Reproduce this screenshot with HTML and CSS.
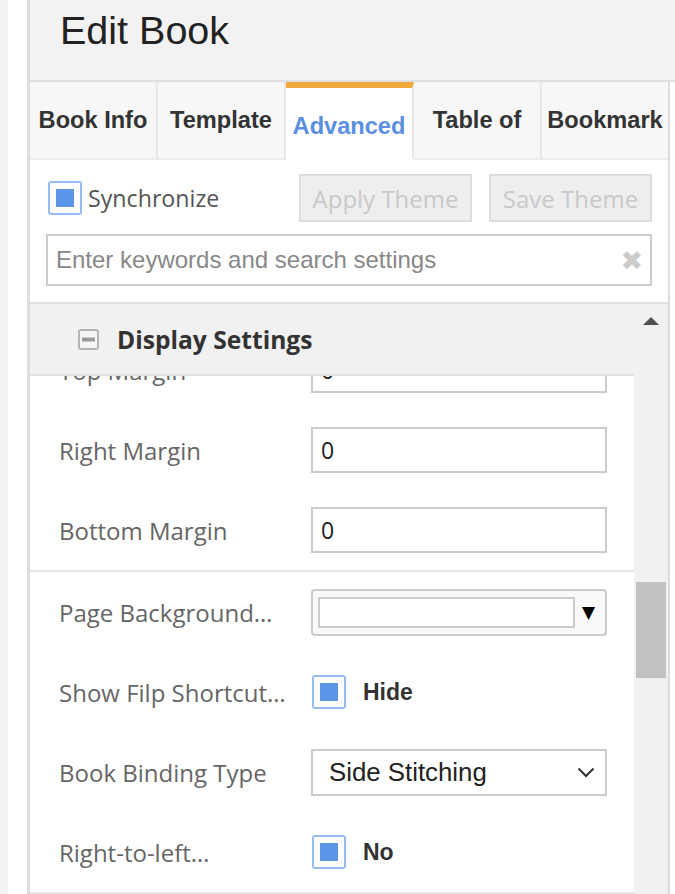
FILE: index.html
```html
<!DOCTYPE html>
<html lang="en">

<head>
    <meta charset="UTF-8">
    <meta name="viewport" content="width=device-width, initial-scale=1.0">
    <title>Edit Book</title>
    <link rel="stylesheet" href="styles.css">
</head>

<body>
    <div class="gutter"></div>

    <div class="panel">
        <div class="panel-head">
            <h1>Edit Book</h1>
        </div>

        <div class="panel-body">
            <div class="main">
                <div class="tabs">
                    <div class="tab">Book Info</div>
                    <div class="tab">Template</div>
                    <div class="tab active">Advanced</div>
                    <div class="tab">Table of</div>
                    <div class="tab last">Bookmark</div>
                </div>

                <div class="toolbar">
                    <div class="sync-row">
                        <span class="check"><span class="check-mark"></span></span>
                        <span class="sync-label">Synchronize</span>
                        <button class="btn first">Apply Theme</button>
                        <button class="btn">Save Theme</button>
                    </div>
                    <div class="search">
                        <input type="text" placeholder="Enter keywords and search settings">
                        <span class="search-clear">&#10006;</span>
                    </div>
                </div>

                <div class="settings-area">
                    <div class="settings">
                        <div class="section-head">
                            <svg class="collapse-icon" width="21" height="21" viewBox="0 0 21 21">
                                <rect x="1" y="1" width="19" height="19" rx="2" fill="#f6f6f6" stroke="#b4b4b4" stroke-width="2" />
                                <rect x="4" y="8.5" width="13" height="4" fill="#9a9a9a" />
                            </svg>
                            <span>Display Settings</span>
                        </div>

                        <div class="rows-view">
                            <div class="rows">
                                <div class="group">
                                    <div class="row">
                                        <span class="label">Top Margin</span>
                                        <input class="field" type="text" value="0">
                                    </div>
                                    <div class="row">
                                        <span class="label">Right Margin</span>
                                        <input class="field" type="text" value="0">
                                    </div>
                                    <div class="row">
                                        <span class="label">Bottom Margin</span>
                                        <input class="field" type="text" value="0">
                                    </div>
                                </div>
                                <div class="group">
                                    <div class="row">
                                        <span class="label">Page Background…</span>
                                        <div class="color-pick">
                                            <span class="swatch"></span>
                                            <span class="color-arrow">&#9660;</span>
                                        </div>
                                    </div>
                                    <div class="row">
                                        <span class="label">Show Filp Shortcut…</span>
                                        <span class="check"><span class="check-mark"></span></span>
                                        <span class="check-text">Hide</span>
                                    </div>
                                    <div class="row">
                                        <span class="label">Book Binding Type</span>
                                        <div class="select">
                                            <span>Side Stitching</span>
                                            <svg width="18" height="11" viewBox="0 0 18 11">
                                                <path d="M1.5 1.5 L9 9 L16.5 1.5" fill="none" stroke="#333" stroke-width="2" />
                                            </svg>
                                        </div>
                                    </div>
                                    <div class="row">
                                        <span class="label">Right-to-left…</span>
                                        <span class="check"><span class="check-mark"></span></span>
                                        <span class="check-text">No</span>
                                    </div>
                                </div>
                            </div>
                        </div>
                    </div>

                    <div class="scrollbar">
                        <div class="scroll-up"><span class="arrow-up"></span></div>
                        <div class="scroll-thumb"></div>
                    </div>
                </div>
            </div>
            <div class="edge"></div>
        </div>
    </div>
</body>

</html>
```

FILE: styles.css
```css
html,
body {
    margin: 0;
    height: 100%;
}

body {
    display: flex;
    overflow: hidden;
    background: #fff;
    font-family: 'Open Sans', sans-serif;
}

.gutter {
    width: 19px;
    border-left: 8px solid #f2f2f2;
    background: #fff;
}

.panel {
    flex: 1;
    display: flex;
    flex-direction: column;
    border-left: 3px solid #dddddd;
    min-width: 0;
}

/* title bar */
.panel-head {
    height: 80px;
    background: #f2f2f2;
    border-bottom: 2px solid #dde0e3;
    padding-left: 30px;
}

.panel-head h1 {
    margin: 0;
    padding-top: 8px;
    font-family: 'Liberation Sans', Arial, sans-serif;
    font-weight: normal;
    font-size: 39.5px;
    line-height: 44px;
    color: #222;
}

.panel-body {
    flex: 1;
    display: flex;
    min-height: 0;
}

.main {
    width: 638px;
    display: flex;
    flex-direction: column;
    border-right: 2px solid #dddddd;
}

.edge {
    flex: 1;
    background: #fff;
}

/* tabs */
.tabs {
    display: flex;
    height: 78px;
}

.tab {
    flex: 1;
    display: flex;
    align-items: center;
    justify-content: center;
    background: #f7f7f7;
    border-right: 2px solid #e8e8e8;
    border-bottom: 2px solid #ececec;
    font-family: 'Liberation Sans', Arial, sans-serif;
    font-weight: bold;
    font-size: 23.6px;
    color: #333;
    white-space: nowrap;
    overflow: hidden;
}

.tab.last {
    border-right: none;
}

.tab.active {
    background: #fff;
    border-top: 6px solid #f3a83b;
    border-bottom-color: #fff;
    color: #5b8fe0;
    padding-top: 6px;
    box-sizing: border-box;
}

/* synchronize + search */
.toolbar {
    padding: 14px 16px 16px 16px;
    border-bottom: 2px solid #dde0e3;
}

.sync-row {
    display: flex;
    align-items: center;
    height: 48px;
    padding-left: 2px;
}

.check {
    width: 30px;
    height: 30px;
    border: 2px solid #96bcf3;
    border-radius: 3px;
    background: #fff;
    display: flex;
    align-items: center;
    justify-content: center;
    flex-shrink: 0;
}

.check-mark {
    width: 18px;
    height: 18px;
    background: #5b94e9;
}

.sync-label {
    margin-left: 6px;
    font-size: 23.2px;
    color: #555;
}

.btn {
    height: 48px;
    padding: 0;
    background: #eeeeee;
    border: 2px solid #dcdcdc;
    font-family: 'Open Sans', sans-serif;
    font-size: 24px;
    color: #c9c9c9;
}

.btn.first {
    margin-left: auto;
    width: 173px;
    margin-right: 17px;
}

.btn:last-child {
    width: 163px;
}

.search {
    margin-top: 12px;
    height: 48px;
    border: 2px solid #cccccc;
    display: flex;
    align-items: center;
    padding: 0 7px 0 8px;
}

.search input {
    flex: 1;
    min-width: 0;
    border: none;
    outline: none;
    padding: 0;
    font-family: 'Liberation Sans', Arial, sans-serif;
    font-size: 24px;
    color: #333;
}

.search input::placeholder {
    color: #888;
}

.search-clear {
    color: #cccccc;
    font-size: 27px;
    line-height: 1;
    font-family: 'DejaVu Sans', sans-serif;
}

/* settings list */
.settings-area {
    flex: 1;
    display: flex;
    min-height: 0;
}

.settings {
    flex: 1;
    display: flex;
    flex-direction: column;
    min-height: 0;
}

.section-head {
    height: 70px;
    flex-shrink: 0;
    background: #f1f1f1;
    border-bottom: 2px solid #e0e1e6;
    display: flex;
    align-items: center;
    padding-left: 48px;
    font-weight: bold;
    font-size: 24.6px;
    color: #333;
}

.collapse-icon {
    margin-right: 18px;
}

.rows-view {
    flex: 1;
    overflow: hidden;
}

.rows {
    margin-top: -46px;
}

.group {
    border-bottom: 2px solid #e6e6e6;
}

.row {
    height: 80px;
    display: flex;
    align-items: center;
    padding-left: 29px;
}

.label {
    width: 252px;
    flex-shrink: 0;
    font-size: 24px;
    color: #666;
    white-space: nowrap;
}

.field {
    width: 296px;
    height: 46px;
    box-sizing: border-box;
    border: 2px solid #cccccc;
    padding: 0 8px;
    font-family: 'Open Sans', sans-serif;
    font-size: 23px;
    color: #222;
}

.color-pick {
    width: 296px;
    height: 47px;
    box-sizing: border-box;
    border: 2px solid #cccccc;
    border-radius: 4px;
    background: #f9f9f9;
    display: flex;
    align-items: center;
    padding-left: 5px;
}

.swatch {
    width: 257px;
    height: 31px;
    box-sizing: border-box;
    border: 2px solid #cccccc;
    background: #fff;
}

.color-arrow {
    margin-left: 7px;
    font-family: 'DejaVu Sans', sans-serif;
    font-size: 17px;
    color: #000;
}

.row .check {
    margin-left: 1px;
}

.check-text {
    margin-left: 17px;
    font-family: 'Liberation Sans', Arial, sans-serif;
    font-weight: bold;
    font-size: 23px;
    color: #333;
}

.select {
    width: 296px;
    height: 47px;
    box-sizing: border-box;
    border: 2px solid #cccccc;
    display: flex;
    align-items: center;
    justify-content: space-between;
    padding: 0 10px 0 16px;
    font-family: 'Liberation Sans', Arial, sans-serif;
    font-size: 25.8px;
    color: #222;
}

/* scrollbar */
.scrollbar {
    width: 34px;
    background: #f1f1f1;
    display: flex;
    flex-direction: column;
    align-items: center;
}

.scroll-up {
    height: 34px;
    width: 34px;
    display: flex;
    align-items: center;
    justify-content: center;
}

.arrow-up {
    width: 0;
    height: 0;
    border-left: 8px solid transparent;
    border-right: 8px solid transparent;
    border-bottom: 8px solid #505050;
}

.scroll-thumb {
    margin-top: 244px;
    width: 30px;
    height: 96px;
    background: #c1c1c1;
}
```
